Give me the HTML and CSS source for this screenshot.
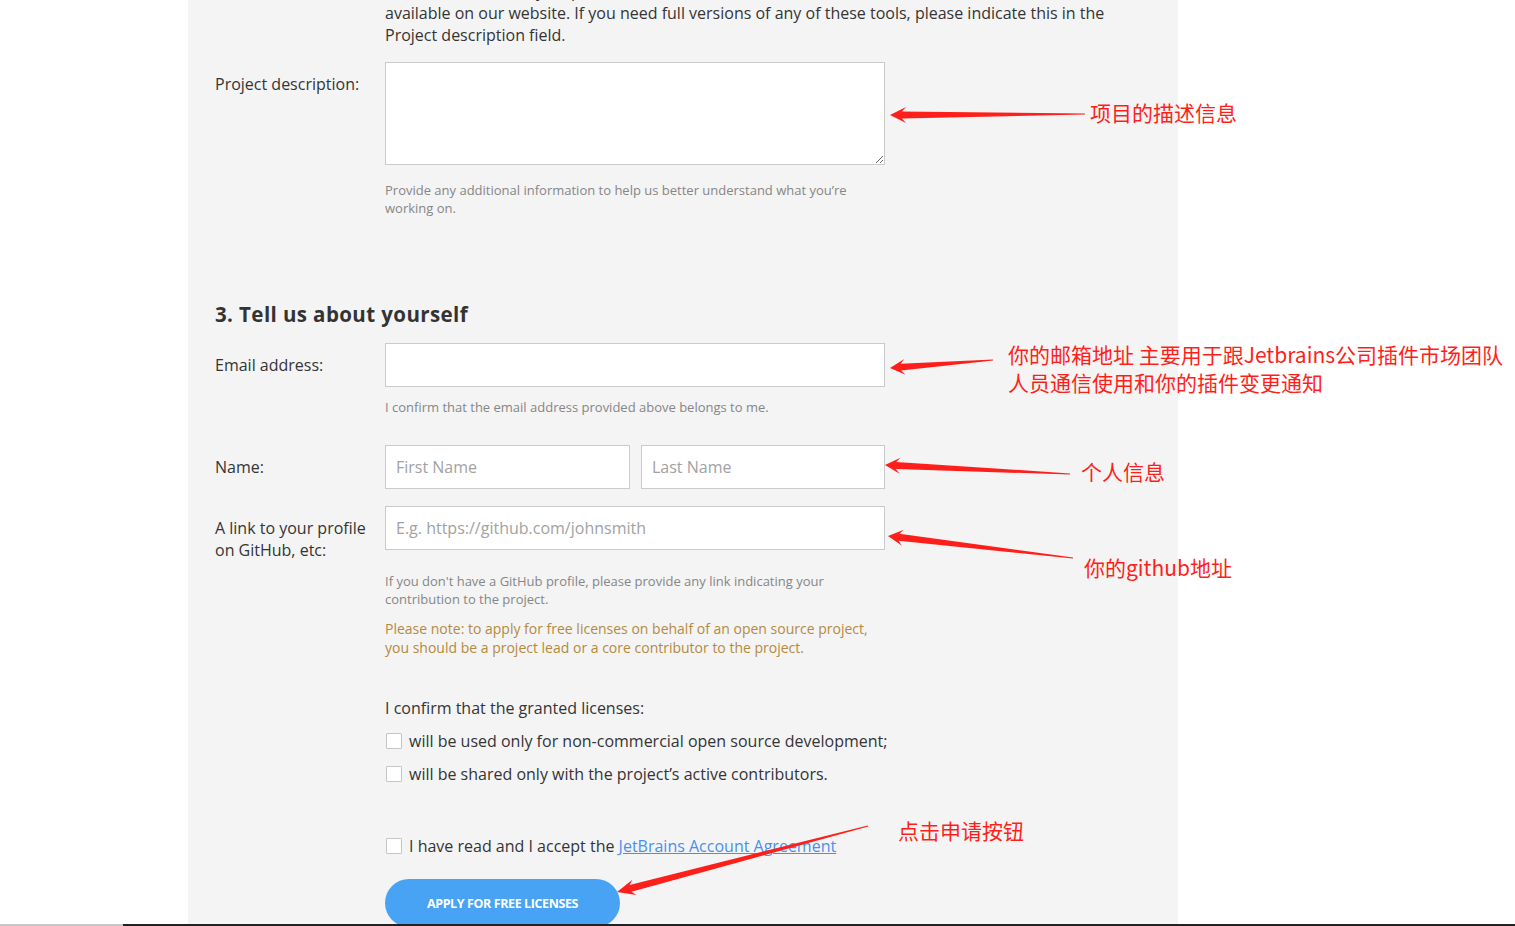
FILE: index.html
```html
<!DOCTYPE html>
<html lang="en">
<head>
<meta charset="utf-8">
<title>Apply for free licenses</title>
<link rel="stylesheet" href="styles.css">
</head>
<body>
<div class="screen">
  <main class="panel">
    <div class="row intro-row">
      <div class="label"></div>
      <div class="field intro">
        free licenses can only be provided for the commercial versions of the tools, which are<br>
        available on our website. If you need full versions of any of these tools, please indicate this in the<br>
        Project description field.
      </div>
    </div>

    <div class="row row-desc">
      <label class="label">Project description:</label>
      <div class="field">
        <textarea class="textarea"></textarea>
        <p class="hint hint-desc">Provide any additional information to help us better understand what you’re<br>working on.</p>
      </div>
    </div>

    <h2 class="section-title">3. Tell us about yourself</h2>

    <div class="row row-email">
      <label class="label">Email address:</label>
      <div class="field">
        <input class="input" type="text">
        <p class="hint hint-email">I confirm that the email address provided above belongs to me.</p>
      </div>
    </div>

    <div class="row row-name">
      <label class="label">Name:</label>
      <div class="field name-fields">
        <input class="input" type="text" placeholder="First Name">
        <input class="input" type="text" placeholder="Last Name">
      </div>
    </div>

    <div class="row row-github">
      <label class="label">A link to your profile<br>on GitHub, etc:</label>
      <div class="field">
        <input class="input" type="text" placeholder="E.g. https://github.com/johnsmith">
        <p class="hint hint-github">If you don't have a GitHub profile, please provide any link indicating your<br>contribution to the project.</p>
        <p class="note">Please note: to apply for free licenses on behalf of an open source project,<br>you should be a project lead or a core contributor to the project.</p>

        <p class="confirm-title">I confirm that the granted licenses:</p>
        <label class="check"><input type="checkbox" class="box"><span>will be used only for non-commercial open source development;</span></label>
        <label class="check"><input type="checkbox" class="box"><span>will be shared only with the project’s active contributors.</span></label>

        <label class="check check-agree"><input type="checkbox" class="box"><span>I have read and I accept the <a class="link" href="#">JetBrains Account Agreement</a></span></label>

        <button class="apply" type="button">APPLY FOR FREE LICENSES</button>
      </div>
    </div>
  </main>

  <div class="annotations">
    <svg class="arrows" width="1515" height="926" viewBox="0 0 1515 926">
      <g fill="#ff1f1a">
        <polygon points="890,115 906,123 902,118.6 1085,114.6 1085,113.4 902,111.4 906,107"/>
        <polygon points="890,368 905.6,374.8 901.2,370.6 993.05,360.6 992.95,359.4 900.7,363.7 904.3,358.9"/>
        <polygon points="885,465 899.6,473.7 895.8,469 1070,474.6 1070,473.4 896.2,462 900.4,457.7"/>
        <polygon points="888,536 902,545.7 898.5,540.8 1072.9,558.6 1073.1,557.4 899.3,533.8 903.8,529.8"/>
        <polygon points="617,892 636.4,895.1 631.4,891.8 868.2,826.6 867.8,825.4 629.6,885 632.4,879.7"/>
      </g>
    </svg>
    <div class="note-cn cn-desc">项目的描述信息</div>
    <div class="note-cn cn-email">你的邮箱地址 主要用于跟Jetbrains公司插件市场团队<br>人员通信使用和你的插件变更通知</div>
    <div class="note-cn cn-name">个人信息</div>
    <div class="note-cn cn-github">你的github地址</div>
    <div class="note-cn cn-apply">点击申请按钮</div>
  </div>

  <div class="taskbar"><span class="tb-left"></span><span class="tb-right"></span></div>
</div>
</body>
</html>
```

FILE: styles.css
```css
* { box-sizing: border-box; }

html, body {
  margin: 0;
  padding: 0;
  background: #ffffff;
  overflow: hidden;
}

body {
  font-family: "Open Sans", "Liberation Sans", sans-serif;
  color: #343434;
  font-size: 16px;
  line-height: 22px;
}

.screen {
  position: relative;
  width: 1515px;
  height: 926px;
  overflow: hidden;
}

.panel {
  margin-left: 188px;
  width: 990px;
  min-height: 926px;
  background: #f4f4f4;
  padding: 0 0 0 27px;
}

.row {
  display: grid;
  grid-template-columns: 170px 500px;
}

.label {
  display: block;
  padding-top: 11px;
  font-size: 16px;
  line-height: 22px;
  color: #343434;
}

.intro-row { margin-top: -20px; }
.intro-row .label { padding-top: 0; }
.intro {
  white-space: nowrap;
  font-size: 16px;
  line-height: 22px;
}

.row-desc { margin-top: 16px; }

.textarea {
  display: block;
  width: 500px;
  height: 103px;
  border: 1px solid #cbcbcb;
  background: #fff;
  margin: 0;
  padding: 8px 11px;
  font-family: inherit;
  font-size: 16px;
}

.hint {
  margin: 0;
  font-size: 13px;
  line-height: 18px;
  color: #868686;
  white-space: nowrap;
}
.hint-desc { margin-top: 16px; }
.hint-email { margin-top: 11px; }
.hint-github { margin-top: 22px; }

.section-title {
  margin: 84px 0 0 0;
  font-family: "Open Sans", "Liberation Sans", sans-serif;
  font-weight: 700;
  font-size: 20.5px;
  line-height: 26px;
  color: #333;
  letter-spacing: 0.4px;
}

.row-email { margin-top: 16px; }
.row-name { margin-top: 29px; }
.row-github { margin-top: 17px; }

.input {
  display: block;
  width: 100%;
  height: 44px;
  margin: 0;
  border: 1px solid #cbcbcb;
  background: #fff;
  padding: 0 10px;
  font-family: inherit;
  font-size: 16px;
  color: #343434;
  outline: none;
}
.input::placeholder { color: #a2a2a2; }

.name-fields {
  display: grid;
  grid-template-columns: 245px 244px;
  column-gap: 11px;
}

.note {
  margin: 11px 0 0 0;
  font-size: 14px;
  line-height: 19px;
  color: #b48a3e;
  white-space: nowrap;
}

.confirm-title {
  margin: 40px 0 0 0;
  font-size: 16px;
  line-height: 22px;
  color: #343434;
}

.check {
  display: flex;
  align-items: center;
  gap: 7px;
  margin-top: 11px;
  padding-left: 1px;
  font-size: 16px;
  line-height: 22px;
  white-space: nowrap;
  color: #343434;
}

.check-agree { margin-top: 50px; }

.box {
  appearance: none;
  -webkit-appearance: none;
  width: 16px;
  height: 16px;
  margin: 0;
  flex: none;
  border: 1px solid #c6c6c6;
  background: #fff;
  border-radius: 1px;
}

.link {
  color: #4a8ff0;
  text-decoration: underline;
}

.apply {
  display: block;
  margin-top: 22px;
  width: 235px;
  height: 48px;
  border: none;
  border-radius: 24px;
  background: #48a3f5;
  color: #fff;
  font-family: "Open Sans", "Liberation Sans", sans-serif;
  font-weight: 700;
  font-size: 12.5px;
  letter-spacing: -0.4px;
  padding: 0;
}

/* annotation overlay */
.annotations {
  position: absolute;
  left: 0;
  top: 0;
  width: 1515px;
  height: 926px;
  pointer-events: none;
}

.arrows {
  position: absolute;
  left: 0;
  top: 0;
}

.note-cn {
  position: absolute;
  font-family: "Noto Sans CJK SC", sans-serif;
  font-size: 21px;
  line-height: 28px;
  color: #ff1f1a;
  white-space: nowrap;
}
.cn-desc { left: 1090px; top: 98px; }
.cn-email { left: 1008px; top: 340px; }
.cn-name { left: 1081px; top: 457px; }
.cn-github { left: 1084px; top: 553px; }
.cn-apply { left: 898px; top: 816px; }

.taskbar {
  position: absolute;
  left: 0;
  bottom: 0;
  width: 1515px;
  height: 2px;
  display: flex;
}
.tb-left { width: 123px; background: #c8c8c8; }
.tb-right { flex: 1; background: #222; }
```
